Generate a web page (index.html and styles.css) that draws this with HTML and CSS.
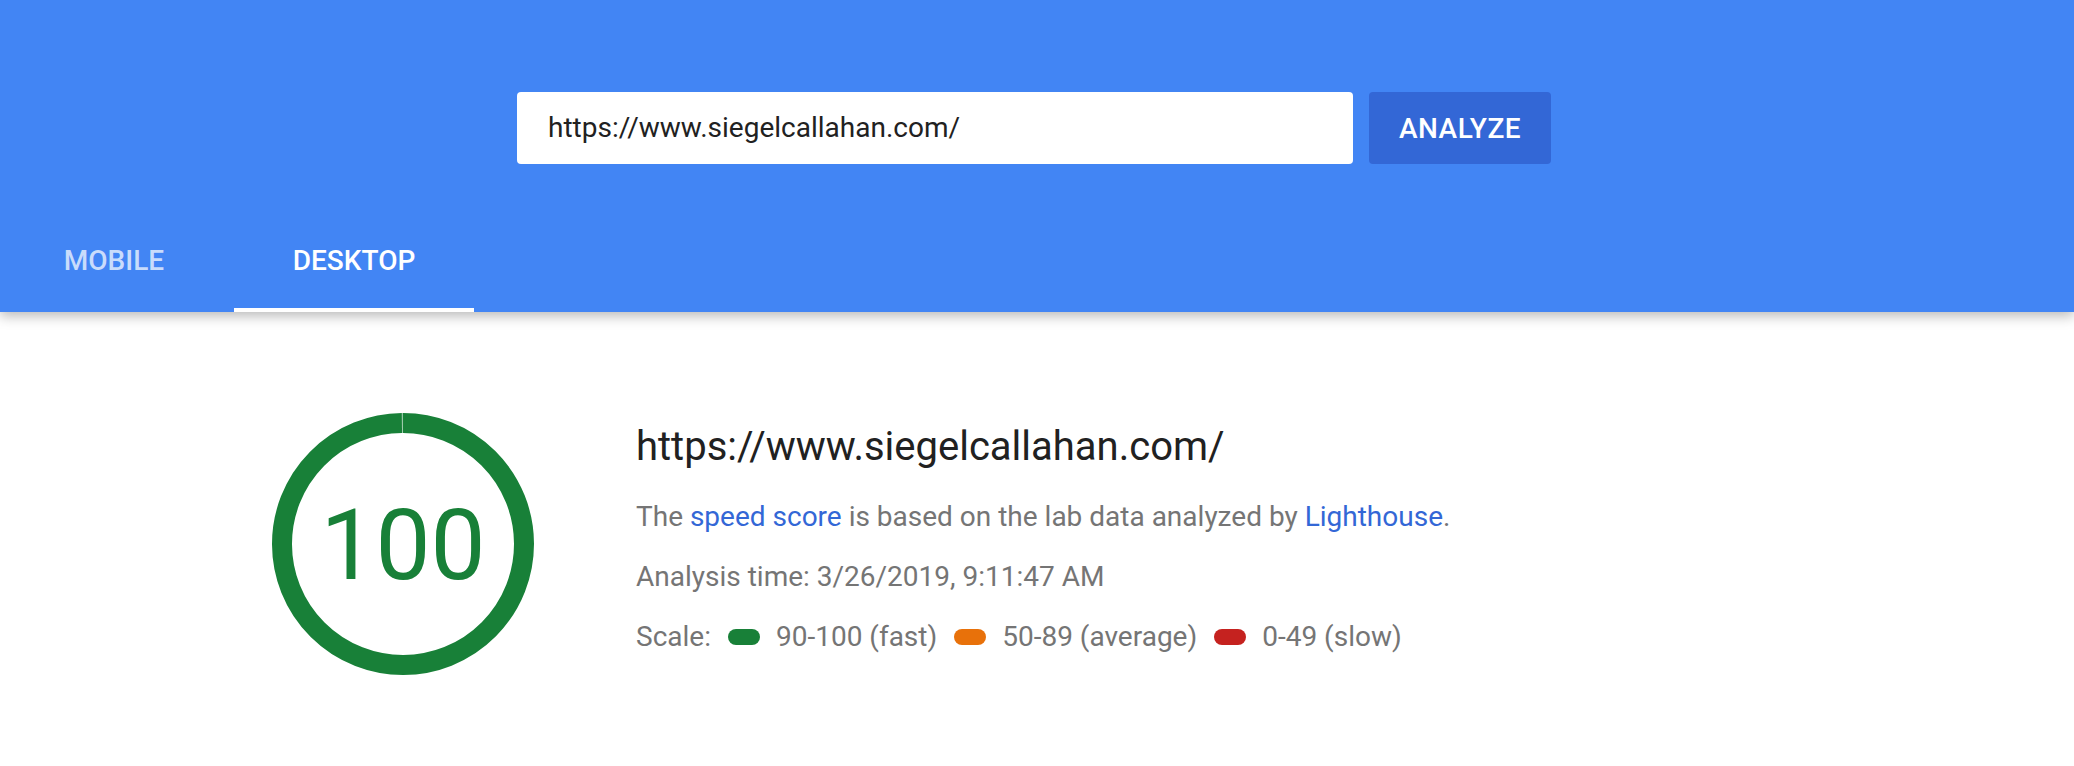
FILE: index.html
```html
<!DOCTYPE html>
<html>
<head>
<meta charset="utf-8">
<link rel="stylesheet" href="styles.css">
</head>
<body>
<header class="header">
  <form class="search">
    <div class="url-input">https://www.siegelcallahan.com/</div>
    <button type="button" class="analyze">ANALYZE</button>
  </form>
  <nav class="tabs">
    <div class="tab">MOBILE</div>
    <div class="tab tab-active">DESKTOP</div>
  </nav>
</header>
<main class="main">
  <div class="gauge">
    <svg width="262" height="262" viewBox="0 0 262 262">
      <circle cx="131" cy="131" r="121" fill="none" stroke="#188038" stroke-width="20" stroke-dasharray="759.3 1" transform="rotate(-90.2 131 131)"/>
      <text x="131" y="166" text-anchor="middle" class="gauge-num">100</text>
    </svg>
  </div>
  <section class="info">
    <h1 class="title">https://www.siegelcallahan.com/</h1>
    <p class="line">The <a class="link">speed score</a> is based on the lab data analyzed by <a class="link">Lighthouse</a>.</p>
    <p class="line">Analysis time: 3/26/2019, 9:11:47 AM</p>
    <p class="line scale">Scale:
      <span class="item"><span class="pill pill-fast"></span>90-100 (fast)</span>
      <span class="item"><span class="pill pill-avg"></span>50-89 (average)</span>
      <span class="item"><span class="pill pill-slow"></span>0-49 (slow)</span>
    </p>
  </section>
</main>
</body>
</html>
```
FILE: styles.css
```css
* { box-sizing: border-box; }
body {
  margin: 0;
  font-family: Roboto, "Liberation Sans", Arial, sans-serif;
  background: #fff;
}
.header {
  background: #4285f4;
  padding-top: 92px;
  height: 312px;
  box-shadow: 0 4px 12px rgba(0,0,0,0.28);
  position: relative;
  z-index: 1;
}
.search {
  display: flex;
  justify-content: center;
  gap: 16px;
  padding-right: 6px;
  margin: 0;
}
.url-input {
  width: 836px;
  height: 72px;
  background: #fff;
  border-radius: 4px;
  padding-left: 31px;
  font-size: 28px;
  line-height: 72px;
  color: #212121;
}
.analyze {
  width: 182px;
  height: 72px;
  border: none;
  border-radius: 4px;
  background: #3367d6;
  color: #fff;
  font-family: Roboto, "Liberation Sans", Arial, sans-serif;
  font-size: 28px;
  font-weight: 500;
  letter-spacing: 0.5px;
  padding: 0;
}
.tabs {
  display: flex;
  margin-top: 49px;
  margin-left: -6px;
}
.tab {
  width: 240px;
  height: 99px;
  line-height: 95px;
  text-align: center;
  font-size: 28px;
  font-weight: 500;
  color: rgba(255,255,255,0.72);
  border-bottom: 4px solid transparent;
}
.tab-active {
  color: #fff;
  border-bottom-color: #fff;
}
.main {
  display: flex;
  align-items: flex-start;
  padding: 101px 0 0 272px;
}
.gauge {
  width: 262px;
  height: 262px;
  flex: none;
}
.gauge svg { display: block; }
.gauge-num {
  font-family: Roboto, "Liberation Sans", Arial, sans-serif;
  font-size: 98px;
  fill: #188038;
}
.info {
  margin-left: 102px;
  padding-top: 6px;
}
.title {
  margin: 0 0 22px;
  font-size: 40px;
  line-height: 56px;
  font-weight: 400;
  color: #212121;
}
.line {
  margin: 0 0 20px;
  font-size: 28px;
  line-height: 40px;
  color: #757575;
}
.link {
  color: #3367d6;
  text-decoration: none;
}
.scale {
  display: flex;
  align-items: center;
}
.item {
  display: flex;
  align-items: center;
  margin-left: 17px;
}
.item + .item { margin-left: 17px; }
.pill {
  width: 32px;
  height: 16px;
  border-radius: 8px;
  margin-right: 16px;
}
.pill-fast { background: #188038; }
.pill-avg { background: #e8710a; }
.pill-slow { background: #c5221f; }
```
